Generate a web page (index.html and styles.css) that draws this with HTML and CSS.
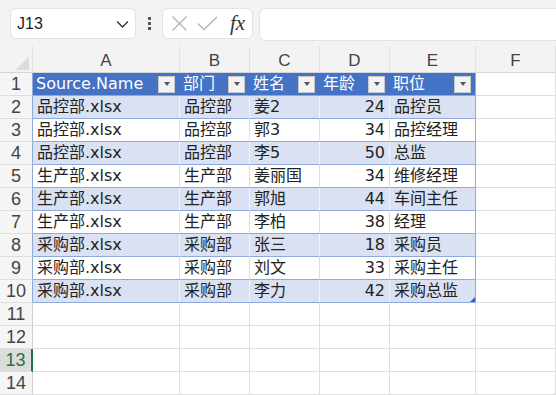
FILE: index.html
```html
<!DOCTYPE html>
<html lang="zh-CN">

<head>
    <meta charset="UTF-8">
    <meta name="viewport" content="width=device-width, initial-scale=1.0">
    <title>Sheet</title>
    <link rel="stylesheet" href="styles.css">
</head>

<body>
    <div class="toolbar">
        <div class="name-box">
            <span>J13</span>
            <svg class="chevron" width="13" height="8" viewBox="0 0 13 8"><path d="M1 1.5 L6.5 7 L12 1.5" fill="none" stroke="#333" stroke-width="1.4"/></svg>
        </div>
        <div class="dots"><i></i><i></i><i></i></div>
        <div class="fx-box">
            <svg width="17" height="17" viewBox="0 0 17 17"><path d="M1.5 1.5 L15.5 15.5 M15.5 1.5 L1.5 15.5" stroke="#b4b4b4" stroke-width="1.4"/></svg>
            <svg width="21" height="17" viewBox="0 0 21 17"><path d="M1 8.5 L7 14.5 L20 2" fill="none" stroke="#b4b4b4" stroke-width="1.4"/></svg>
            <span class="fx">fx</span>
        </div>
        <div class="formula-input"></div>
    </div>

    <table class="sheet">
        <colgroup>
            <col class="c-rh">
            <col class="c-a">
            <col class="c-b">
            <col class="c-c">
            <col class="c-d">
            <col class="c-e">
            <col class="c-f">
        </colgroup>
        <thead>
            <tr>
                <th class="corner"><svg width="14" height="13" viewBox="0 0 14 13"><path d="M14 0 L14 13 L0 13 Z" fill="#dcdcdc"/></svg></th>
                <th>A</th>
                <th>B</th>
                <th>C</th>
                <th>D</th>
                <th>E</th>
                <th>F</th>
            </tr>
        </thead>
        <tbody>
            <tr class="head">
                <td class="rh">1</td>
                <td><div class="hcell"><span>Source.Name</span><b class="drop"></b></div></td>
                <td><div class="hcell"><span>部门</span><b class="drop"></b></div></td>
                <td><div class="hcell"><span>姓名</span><b class="drop"></b></div></td>
                <td><div class="hcell"><span>年龄</span><b class="drop"></b></div></td>
                <td class="last"><div class="hcell"><span>职位</span><b class="drop"></b></div></td>
                <td class="free"></td>
            </tr>
            <tr class="band">
                <td class="rh">2</td><td>品控部.xlsx</td><td>品控部</td><td>姜2</td><td class="num">24</td><td class="last">品控员</td><td class="free"></td>
            </tr>
            <tr class="plain">
                <td class="rh">3</td><td>品控部.xlsx</td><td>品控部</td><td>郭3</td><td class="num">34</td><td class="last">品控经理</td><td class="free"></td>
            </tr>
            <tr class="band">
                <td class="rh">4</td><td>品控部.xlsx</td><td>品控部</td><td>李5</td><td class="num">50</td><td class="last">总监</td><td class="free"></td>
            </tr>
            <tr class="plain">
                <td class="rh">5</td><td>生产部.xlsx</td><td>生产部</td><td>姜丽国</td><td class="num">34</td><td class="last">维修经理</td><td class="free"></td>
            </tr>
            <tr class="band">
                <td class="rh">6</td><td>生产部.xlsx</td><td>生产部</td><td>郭旭</td><td class="num">44</td><td class="last">车间主任</td><td class="free"></td>
            </tr>
            <tr class="plain">
                <td class="rh">7</td><td>生产部.xlsx</td><td>生产部</td><td>李柏</td><td class="num">38</td><td class="last">经理</td><td class="free"></td>
            </tr>
            <tr class="band">
                <td class="rh">8</td><td>采购部.xlsx</td><td>采购部</td><td>张三</td><td class="num">18</td><td class="last">采购员</td><td class="free"></td>
            </tr>
            <tr class="plain">
                <td class="rh">9</td><td>采购部.xlsx</td><td>采购部</td><td>刘文</td><td class="num">33</td><td class="last">采购主任</td><td class="free"></td>
            </tr>
            <tr class="band">
                <td class="rh">10</td><td>采购部.xlsx</td><td>采购部</td><td>李力</td><td class="num">42</td><td class="last corner-cell">采购总监<b class="resize"></b></td><td class="free"></td>
            </tr>
            <tr>
                <td class="rh">11</td><td></td><td></td><td></td><td></td><td></td><td></td>
            </tr>
            <tr>
                <td class="rh">12</td><td></td><td></td><td></td><td></td><td></td><td></td>
            </tr>
            <tr>
                <td class="rh active">13</td><td></td><td></td><td></td><td></td><td></td><td></td>
            </tr>
            <tr>
                <td class="rh">14</td><td></td><td></td><td></td><td></td><td></td><td></td>
            </tr>
        </tbody>
    </table>
</body>

</html>
```

FILE: styles.css
```css
body {
    margin: 0;
    font-family: 'DejaVu Sans', 'Noto Sans CJK SC', sans-serif;
    font-size: 16px;
    color: #222;
    background: white;
    overflow: hidden;
}

/* formula bar */
.toolbar {
    height: 46px;
    box-sizing: border-box;
    background: #f3f3f3;
    display: flex;
    align-items: flex-start;
    padding-top: 8px;
    padding-left: 10px;
}

.name-box {
    width: 126px;
    height: 31px;
    box-sizing: border-box;
    background: white;
    border: 1px solid #e2e2e2;
    border-radius: 6px;
    display: flex;
    align-items: center;
    justify-content: space-between;
    padding: 0 6px 0 6px;
    font-size: 16px;
    font-family: 'Liberation Sans', 'Noto Sans CJK SC', sans-serif;
}

.dots {
    width: 26px;
    height: 31px;
    display: flex;
    flex-direction: column;
    align-items: center;
    justify-content: center;
    gap: 2px;
}

.dots i {
    width: 3px;
    height: 3px;
    background: #555;
}

.fx-box {
    width: 91px;
    height: 31px;
    box-sizing: border-box;
    background: white;
    border: 1px solid #e2e2e2;
    border-radius: 6px;
    display: flex;
    align-items: center;
    gap: 9px;
    padding-left: 8px;
}

.fx {
    font-family: 'Liberation Serif', serif;
    font-style: italic;
    font-size: 21px;
    color: #333;
    margin-left: 3px;
}

.formula-input {
    flex: 1;
    height: 31px;
    margin-left: 6px;
    background: white;
    border: 1px solid #e2e2e2;
    border-right: none;
    border-radius: 6px 0 0 6px;
}

/* grid */
.sheet {
    border-collapse: separate;
    border-spacing: 0;
    table-layout: fixed;
    width: 556px;
}

.c-rh { width: 33px; }
.c-a { width: 147px; }
.c-b { width: 70px; }
.c-c { width: 70px; }
.c-d { width: 70px; }
.c-e { width: 86px; }
.c-f { width: 80px; }

th {
    height: 24px;
    padding: 0;
    font-weight: normal;
    color: #444;
    background: #f3f3f3;
    border-right: 1px solid #e2e2e2;
    border-bottom: 1px solid #d6d6d6;
    font-family: 'Liberation Sans', sans-serif;
    font-size: 17px;
    line-height: 22px;
    vertical-align: bottom;
}

th.corner {
    text-align: right;
    padding-right: 3px;
    padding-bottom: 2px;
    line-height: 0;
}

td {
    height: 22px;
    padding: 0 4px;
    border-right: 1px solid #dedede;
    border-bottom: 1px solid #dedede;
    white-space: nowrap;
    overflow: hidden;
    line-height: 22px;
}

td.rh {
    padding: 0;
    text-align: center;
    color: #444;
    background: #f5f5f5;
    border-right: 1px solid #d0d0d0;
    font-family: 'Liberation Sans', sans-serif;
    font-size: 18px;
}

td.rh.active {
    background: #dcdcdc;
    color: #217346;
    border-right: 2px solid #217346;
}

td.num {
    text-align: right;
}

/* formatted table */
.head td,
.band td,
.plain td {
    border-bottom-color: #8ea9db;
}

.head td {
    background: #4472c4;
    color: white;
    padding: 0 0 0 3px;
    border-right-color: #4472c4;
}

.band td {
    background: #d9e1f2;
    border-right-color: #f1f4fa;
}

td.last,
.head td.last {
    border-right-color: #8ea9db;
}

.head td.rh,
.band td.rh,
.plain td.rh {
    padding: 0;
    background: #f5f5f5;
    color: #444;
    border-bottom-color: #dedede;
    border-right-color: #8ea9db;
}

td.free,
.head td.free,
.band td.free,
.plain td.free {
    background: white;
    color: #222;
    border-right-color: #dedede;
    border-bottom-color: #dedede;
}

.hcell {
    display: flex;
    align-items: center;
    justify-content: space-between;
}

.drop {
    width: 15px;
    height: 15px;
    margin-right: 4px;
    flex-shrink: 0;
    background: #f2f2f2;
    border: 1px solid #c9c9c9;
    display: flex;
    align-items: center;
    justify-content: center;
}

.drop::after {
    content: "";
    border-left: 3.5px solid transparent;
    border-right: 3.5px solid transparent;
    border-top: 4px solid #555;
}

.corner-cell {
    position: relative;
}

.resize {
    position: absolute;
    right: 0;
    bottom: 0;
    width: 0;
    height: 0;
    border-left: 5px solid transparent;
    border-bottom: 5px solid #3a64b4;
}
```
